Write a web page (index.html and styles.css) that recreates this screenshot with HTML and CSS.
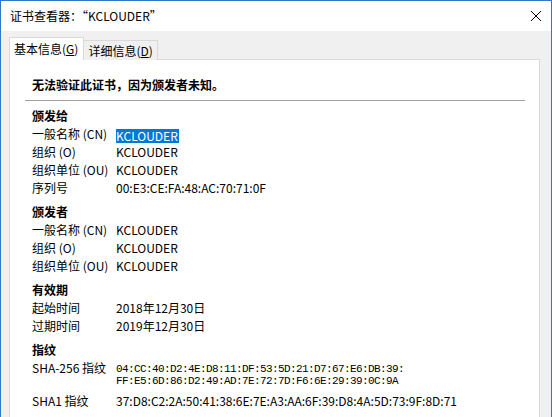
FILE: index.html
```html
<!DOCTYPE html>
<html lang="zh-CN">

<head>
  <meta charset="UTF-8">
  <title>证书查看器</title>
  <link rel="stylesheet" href="styles.css">
</head>

<body>
  <div class="window">
    <div class="titlebar">
      <span class="title">证书查看器：“KCLOUDER”</span>
      <svg class="close" width="12" height="12" viewBox="0 0 12 12">
        <path d="M1 1 L11 11 M11 1 L1 11" stroke="#000" stroke-width="1" fill="none" />
      </svg>
    </div>

    <div class="main">
      <div class="tabs">
        <div class="tab active">基本信息(<u>G</u>)</div>
        <div class="tab">详细信息(<u>D</u>)</div>
      </div>

      <div class="panel">
        <div class="warning">无法验证此证书，因为颁发者未知。</div>
        <div class="separator"></div>

        <div class="group">
          <div class="group-title">颁发给</div>
          <div class="row"><span class="label">一般名称 (CN)</span><span class="value"><span class="selected">KCLOUDER</span></span></div>
          <div class="row"><span class="label">组织 (O)</span><span class="value">KCLOUDER</span></div>
          <div class="row"><span class="label">组织单位 (OU)</span><span class="value">KCLOUDER</span></div>
          <div class="row"><span class="label">序列号</span><span class="value">00:E3:CE:FA:48:AC:70:71:0F</span></div>
        </div>

        <div class="group">
          <div class="group-title">颁发者</div>
          <div class="row"><span class="label">一般名称 (CN)</span><span class="value">KCLOUDER</span></div>
          <div class="row"><span class="label">组织 (O)</span><span class="value">KCLOUDER</span></div>
          <div class="row"><span class="label">组织单位 (OU)</span><span class="value">KCLOUDER</span></div>
        </div>

        <div class="group">
          <div class="group-title">有效期</div>
          <div class="row"><span class="label">起始时间</span><span class="value">2018年12月30日</span></div>
          <div class="row"><span class="label">过期时间</span><span class="value">2019年12月30日</span></div>
        </div>

        <div class="group">
          <div class="group-title">指纹</div>
          <div class="row hash-row">
            <span class="label">SHA-256 指纹</span>
            <span class="value mono">04:CC:40:D2:4E:D8:11:DF:53:5D:21:D7:67:E6:DB:39:<br>FF:E5:6D:86:D2:49:AD:7E:72:7D:F6:6E:29:39:0C:9A</span>
          </div>
          <div class="row"><span class="label">SHA1 指纹</span><span class="value">37:D8:C2:2A:50:41:38:6E:7E:A3:AA:6F:39:D8:4A:5D:73:9F:8D:71</span></div>
        </div>
      </div>
    </div>
  </div>
</body>

</html>
```

FILE: styles.css
```css
html,
body {
  margin: 0;
  padding: 0;
  background-color: #ffffff;
}

body {
  font-family: 'Noto Sans CJK SC', 'Noto Sans', sans-serif;
  font-size: 12px;
  color: #000000;
}

.window {
  width: 550px;
  height: 416px;
  border-top: 1px solid #3078c6;
  border-left: 1px solid #3078c6;
  border-right: 1px solid #3078c6;
  display: flex;
  flex-direction: column;
  overflow: hidden;
  background-color: #f0f0f0;
}

.titlebar {
  height: 30px;
  flex: none;
  display: flex;
  align-items: center;
  justify-content: space-between;
  background-color: #ffffff;
  padding: 0 9px 0 9px;
}

.title {
  line-height: 18px;
}

.close {
  display: block;
}

.main {
  flex: 1;
  padding: 7px 11px 0 8px;
  display: flex;
  flex-direction: column;
}

.tabs {
  display: flex;
  align-items: flex-end;
  height: 22px;
  position: relative;
  z-index: 1;
  margin-bottom: -1px;
}

.tab {
  height: 19px;
  line-height: 19px;
  padding: 0 4px 0 4px;
  border: 1px solid #d9d9d9;
  border-bottom: none;
  background-color: #f0f0f0;
}

.tab.active {
  height: 22px;
  line-height: 22px;
  background-color: #ffffff;
  padding: 0 5px 0 4px;
}

.tab + .tab {
  border-left: none;
}

.panel {
  flex: 1;
  background-color: #ffffff;
  border: 1px solid #d9d9d9;
  border-bottom: none;
  padding: 16px 14px 0 15px;
}

.warning {
  font-weight: bold;
  line-height: 18px;
  padding-left: 7px;
}

.separator {
  height: 1px;
  background-color: #a0a0a0;
  margin: 6px 0 6px 0;
}

.group {
  padding-left: 7px;
  margin-bottom: 6px;
}

.group-title {
  font-weight: bold;
  line-height: 18px;
}

.row {
  display: flex;
  line-height: 18px;
}

.label {
  width: 84px;
  flex: none;
  white-space: nowrap;
}

.value {
  white-space: nowrap;
}

.selected {
  display: inline-block;
  background-color: #0078d7;
  color: #ffffff;
  line-height: 14px;
  vertical-align: middle;
  padding: 0 1px 0 0;
}

.hash-row {
  margin-bottom: 5px;
}

.mono {
  font-family: 'Liberation Mono', monospace;
  font-size: 11px;
  letter-spacing: -0.6px;
  line-height: 12px;
  padding-top: 4px;
}
```
